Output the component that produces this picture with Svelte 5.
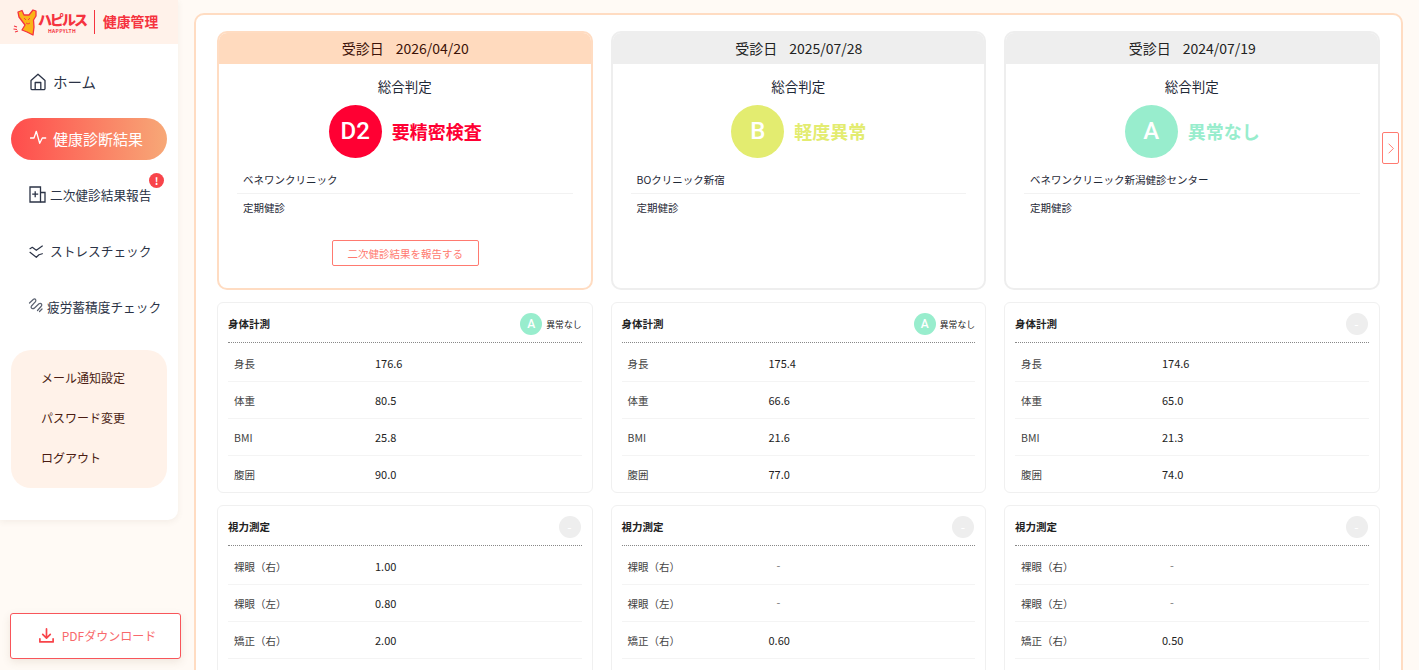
<script>
  const cols = [
    { date: '2026/04/20', current: true, grade: 'D2', cls: 'd', label: '要精密検査', clinic: 'ベネワンクリニック',
      body: ['176.6','80.5','25.8','90.0'], bodyGrade: true, vision: ['1.00','0.80','2.00'] },
    { date: '2025/07/28', current: false, grade: 'B', cls: 'b', label: '軽度異常', clinic: 'BOクリニック新宿',
      body: ['175.4','66.6','21.6','77.0'], bodyGrade: true, vision: ['-','-','0.60'] },
    { date: '2024/07/19', current: false, grade: 'A', cls: 'a', label: '異常なし', clinic: 'ベネワンクリニック新潟健診センター',
      body: ['174.6','65.0','21.3','74.0'], bodyGrade: false, vision: ['-','-','0.50'] }
  ];
  const bodyLabels = ['身長','体重','BMI','腹囲'];
  const visionLabels = ['裸眼（右）','裸眼（左）','矯正（右）'];
</script>

<div class="page">
  <aside class="side">
    <div class="sidecard">
      <div class="logo">
        <svg class="mascot" viewBox="0 0 24 27" width="24" height="27">
          <path d="M5 3 L9 1.500 L11 6 L16 6 L20 1 L23 2 L23 7 L20.500 11 L21 18 L20 26 L14 23 L9 21 L12 16 L9 12 L6 8 Z" fill="#fbb417" stroke="#f5333f" stroke-width="1.300" stroke-linejoin="round"/>
          <path d="M11 9 L13 11 M17 9 L15 11 M13 14 Q15 16 17 14" fill="none" stroke="#f5333f" stroke-width="0.900"/>
          <path d="M1 17 L4 18 M0.500 20 L4 20.500 M2 23 L5 22" stroke="#f5333f" stroke-width="1.100"/>
        </svg>
        <div class="brand">
          <span class="kana">ハピルス</span>
          <span class="latin">HAPPYLTH</span>
        </div>
        <span class="vr"></span>
        <span class="kenko">健康管理</span>
      </div>

      <nav class="nav">
        <a class="item home">
          <svg viewBox="0 0 16 18" width="16" height="18" fill="none" stroke="#2b3346" stroke-width="1.300" stroke-linejoin="round"><path d="M1 7.500 8 1.200l7 6.300v8a1.200 1.200 0 0 1-1.200 1.200H2.200A1.200 1.200 0 0 1 1 15.500Z"/><path d="M5.200 16.700V9.500h5.600v7.200"/></svg>
          <span>ホーム</span>
        </a>
        <a class="item active">
          <svg viewBox="0 0 18 18" width="18" height="18" fill="none" stroke="#fff" stroke-width="1.300" stroke-linejoin="round" stroke-linecap="round"><path d="M0.500 9H4l2.300-6.700 3.400 12L12.300 9h3.400"/></svg>
          <span>健康診断結果</span>
        </a>
        <a class="item small report">
          <svg viewBox="0 0 17 17" width="17" height="17" fill="none" stroke="#2b3346" stroke-width="1.300"><path d="M11.500 16H1V1h10.500Z"/><path d="M11.500 6.500H16V16h-4.500"/><path d="M6.200 5.200v6M3.200 8.200h6"/></svg>
          <span>二次健診結果報告</span>
          <b class="alert">!</b>
        </a>
        <a class="item small stress">
          <svg viewBox="0 0 16 16" width="16" height="16" fill="none" stroke="#2b3346" stroke-width="1.200" stroke-linecap="round" stroke-linejoin="round"><path d="M1 6.700 3.300 5.300 7.300 8.300 13.300 4"/><path d="M1 10.300 7.300 15.300 10 12.700 13.300 11.700"/></svg>
          <span>ストレスチェック</span>
        </a>
        <a class="item small fatigue">
          <svg viewBox="0 0 16 16" width="16" height="16" fill="none" stroke="#5a6170" stroke-width="1.200" stroke-linecap="round" stroke-linejoin="round"><path d="M1.500 5 5.500 1.200Q7 .5 7.800 2 8 3.500 7 4.200L3.500 8Q2.500 9.500 4 10.500 5.500 11 6.500 10L11 5.800Q12.500 5 13.500 6 14.200 7.500 13 8.500L9.500 12.500"/><path d="M11.500 13.500 14 11"/></svg>
          <span>疲労蓄積度チェック</span>
        </a>
      </nav>

      <div class="submenu">
        <a>メール通知設定</a>
        <a>パスワード変更</a>
        <a>ログアウト</a>
      </div>
    </div>

    <button class="pdf">
      <svg viewBox="0 0 18 18" width="17" height="17" fill="none" stroke="#f8444a" stroke-width="1.800" stroke-linecap="round" stroke-linejoin="round"><path d="M9 2v9.500M5 7.800l4 3.900 4-3.900"/><path d="M2 12.500v3.300h14v-3.300"/></svg>
      <span>PDFダウンロード</span>
    </button>
  </aside>

  <main class="panel">
    <div class="cols">
      {#each cols as c}
        <div class="col">
          <section class="summary" class:current={c.current}>
            <header class="date"><span>受診日</span><span>{c.date}</span></header>
            <div class="sumbody">
              <h2>総合判定</h2>
              <div class="verdict {c.cls}">
                <span class="circle">{c.grade}</span>
                <strong>{c.label}</strong>
              </div>
              <p class="info first">{c.clinic}</p>
              <p class="info">定期健診</p>
              {#if c.current}<button class="reportbtn">二次健診結果を報告する</button>{/if}
            </div>
          </section>

          <section class="block">
            <div class="bhead">
              <h3>身体計測</h3>
              {#if c.bodyGrade}
                <div class="mini"><span class="dot a">A</span><em>異常なし</em></div>
              {:else}
                <span class="dot none">-</span>
              {/if}
            </div>
            {#each bodyLabels as l, i}
              <div class="row"><span class="k">{l}</span><span class="v">{c.body[i]}</span></div>
            {/each}
          </section>

          <section class="block open">
            <div class="bhead">
              <h3>視力測定</h3>
              <span class="dot none">-</span>
            </div>
            {#each visionLabels as l, i}
              <div class="row"><span class="k">{l}</span><span class="v" class:dash={c.vision[i] === '-'}>{c.vision[i]}</span></div>
            {/each}
          </section>
        </div>
      {/each}
    </div>
    <button class="next" aria-label="next">
      <svg viewBox="0 0 10 16" width="8" height="13" fill="none" stroke="#ff7a70" stroke-width="1.200"><path d="M2 2l6 6-6 6"/></svg>
    </button>
  </main>
</div>

<style>
  :global(body) {
    margin: 0;
    background: #fffaf5;
    overflow: hidden;
  }
  .page {
    display: flex;
    height: 670px;
    overflow: hidden;
    font-family: "Noto Sans CJK JP", "Noto Sans", sans-serif;
    color: #1f2937;
    font-size: 10.500px;
  }
  a { display: block; }
  button { font-family: inherit; cursor: pointer; }
  h2, h3, p { margin: 0; font-weight: 400; }

  .side {
    width: 178px;
    flex: none;
    display: flex;
    flex-direction: column;
    margin-right: 16px;
  }
  .sidecard {
    height: 520px;
    background: #fff;
    border-radius: 0 0 10px 0;
    box-shadow: 0 2px 6px rgba(120, 90, 60, 0.08);
  }
  .logo {
    height: 44px;
    background: #fff2ea;
    display: flex;
    align-items: center;
    padding-left: 13px;
    color: #f5333f;
    box-sizing: border-box;
  }
  .mascot { flex: none; }
  .brand { display: flex; flex-direction: column; align-items: center; line-height: 1; width: 48px; margin-left: 1px; }
  .kana { font-size: 14px; font-weight: 900; line-height: 17px; white-space: nowrap; letter-spacing: -2px; }
  .latin { font-size: 5px; font-weight: 700; line-height: 6px; letter-spacing: 0.300px; }
  .vr { width: 1px; height: 24px; background: #f5333f; margin: 0 8px 0 8px; }
  .kenko { font-size: 13.800px; font-weight: 700; white-space: nowrap; margin-top: -3px; }

  .nav { display: flex; flex-direction: column; padding: 18px 11px 0; }
  .item {
    height: 42px;
    margin-bottom: 14px;
    display: flex;
    align-items: center;
    gap: 5px;
    padding: 0 0 2px 19px;
    font-size: 14.500px;
    color: #2b3346;
    border-radius: 21px;
    position: relative;
    white-space: nowrap;
    box-sizing: border-box;
  }
  .home { gap: 7px; padding-bottom: 3px; }
  .active {
    color: #fff;
    font-size: 15px;
    background: linear-gradient(90deg, #ff4c4c, #f7a877);
  }
  .small { font-size: 12.700px; gap: 4px; padding-left: 18px; }
  .stress { gap: 5px; }
  .fatigue { padding-left: 17px; gap: 3px; }
  .alert {
    position: absolute;
    left: 138px;
    top: -1px;
    width: 15px;
    height: 15px;
    border-radius: 50%;
    background: #f8444a;
    color: #fff;
    font-size: 10px;
    line-height: 15px;
    text-align: center;
  }
  .submenu {
    margin: 8px 11px 0;
    height: 138px;
    box-sizing: border-box;
    padding: 8px 30px;
    background: #fff2e9;
    border-radius: 20px;
    font-size: 12px;
    color: #4a1c12;
  }
  .submenu a { height: 40px; line-height: 40px; white-space: nowrap; }

  .pdf {
    margin: 93px 0 0 10px;
    width: 171px;
    height: 46px;
    background: #fff;
    border: 1px solid #f8555a;
    border-radius: 3px;
    color: #f8696c;
    font-size: 12px;
    display: flex;
    align-items: center;
    justify-content: center;
    gap: 7px;
    padding: 0 0 1px 3px;
    box-shadow: 0 3px 8px rgba(120, 90, 60, 0.12);
  }

  .panel {
    position: relative;
    margin-top: 13px;
    width: 1209px;
    height: 700px;
    box-sizing: border-box;
    flex: none;
    background: #fff;
    border: 2px solid #ffdcc2;
    border-radius: 10px;
    padding: 16px 21px;
  }
  .cols { display: flex; gap: 18px; width: 1164px; }
  .col { width: 375.500px; flex: none; display: flex; flex-direction: column; gap: 12px; }

  .summary {
    height: 259px;
    box-sizing: border-box;
    border: 2px solid #eeeeee;
    border-radius: 10px;
    overflow: hidden;
  }
  .summary.current { border-color: #ffdcc2; }
  .date {
    height: 31px;
    box-sizing: border-box;
    padding: 0 0 2px 1px;
    background: #eeeeee;
    display: flex;
    align-items: center;
    justify-content: center;
    gap: 12px;
    font-size: 14px;
    color: #222;
  }
  .current .date { background: #ffdabe; color: #3c1208; }
  .sumbody { padding: 0 18px; text-align: center; display: flex; flex-direction: column; align-items: stretch; }
  h2 { font-size: 13.500px; line-height: 20px; margin-top: 12px; }
  .verdict { display: flex; align-items: center; justify-content: center; gap: 10px; height: 53px; margin-top: 9px; padding-left: 1px; }
  .circle {
    width: 53px; height: 53px; border-radius: 50%;
    color: #fff; font-size: 24px; font-weight: 500; line-height: 53px; text-align: center;
    font-family: Roboto, "Noto Sans", sans-serif;
  }
  .verdict strong { font-size: 18px; font-weight: 700; margin-bottom: 2px; }
  .d .circle { background: #ff0033; }
  .d strong { color: #ff0033; }
  .b .circle { background: #e3ec70; }
  .b strong { color: #e3ec70; }
  .a .circle { background: #98edcd; }
  .a strong { color: #98edcd; }
  .info { text-align: left; padding-left: 6px; line-height: 27px; height: 27px; }
  .info.first { margin-top: 8px; border-bottom: 1px solid #f2f2f2; height: 28px; line-height: 28px; box-sizing: border-box; }
  .reportbtn {
    align-self: center;
    width: 147px; height: 26px;
    margin: 19px 0 0 1px;
    background: #fff;
    border: 1px solid #ff7a70;
    border-radius: 2px;
    color: #ff7a70;
    font-size: 10.500px;
    padding: 0;
  }

  .block {
    border: 1px solid #f0f0f0;
    border-radius: 6px;
    padding: 0 10px;
    box-sizing: border-box;
    background: #fff;
  }
  .block.open { padding-bottom: 60px; }
  .bhead {
    height: 40px;
    display: flex;
    align-items: center;
    justify-content: space-between;
    border-bottom: 1px dotted #888;
    box-sizing: border-box;
    padding-top: 3px;
    margin-bottom: 2px;
  }
  h3 { font-size: 10.500px; font-weight: 700; color: #222; margin-top: -2px; }
  .mini { display: flex; align-items: center; gap: 4px; }
  .mini em { font-style: normal; font-size: 8.800px; color: #222; }
  .dot {
    width: 22px; height: 22px; border-radius: 50%;
    color: #fff; text-align: center; line-height: 22px; font-size: 12px; font-weight: 500;
    display: block;
  }
  .dot.a { background: #98edcd; font-family: Roboto, sans-serif; }
  .dot.none { background: #eeeeee; margin-right: 1px; }
  .row {
    height: 37px;
    display: flex;
    align-items: center;
    padding-left: 6px;
    border-bottom: 1px solid #f4f4f4;
    box-sizing: border-box;
  }
  .row:last-child { border-bottom: none; height: 36px; }
  .open .row:last-child { border-bottom: 1px solid #f4f4f4; height: 37px; }
  .k { width: 141px; color: #444; }
  .v { color: #222; font-size: 11px; }
  .v.dash { color: #777; padding-left: 8px; margin-top: -2px; }

  .next {
    position: absolute;
    left: 1186px;
    top: 117px;
    width: 17px;
    height: 32px;
    padding: 0;
    background: #fff;
    border: 1px solid #ff7a70;
    border-radius: 2px;
    display: flex;
    align-items: center;
    justify-content: center;
  }
</style>
